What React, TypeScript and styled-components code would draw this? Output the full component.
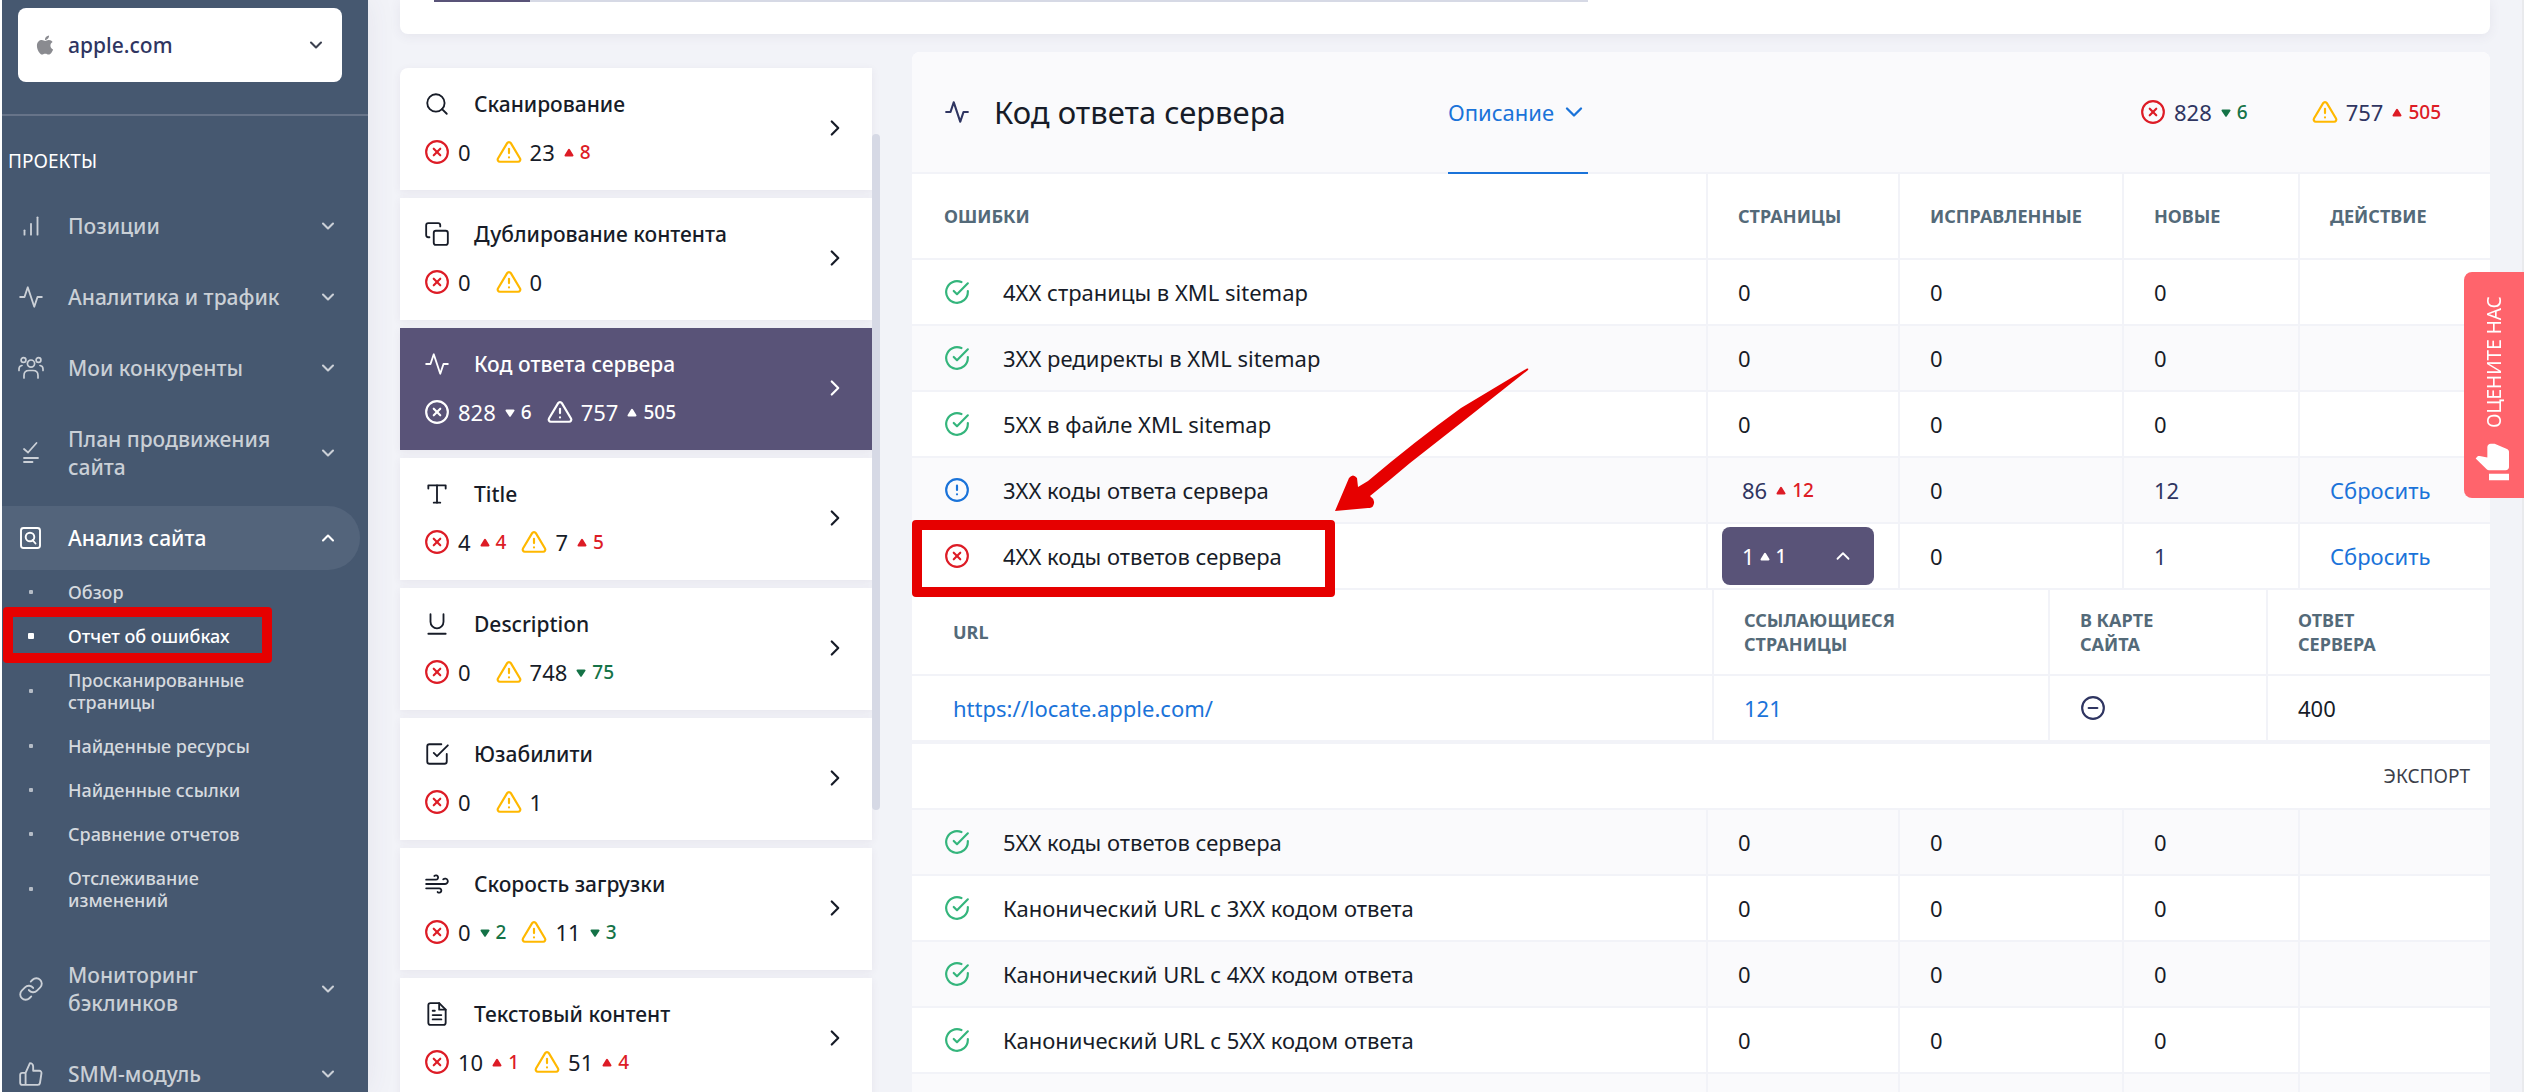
import React from 'react';
import styled, { createGlobalStyle, css } from 'styled-components';
import type { IconType } from 'react-icons';
import {
  FiActivity,
  FiAlertCircle,
  FiAlertTriangle,
  FiBarChart,
  FiCheckCircle,
  FiCheckSquare,
  FiChevronDown,
  FiChevronRight,
  FiChevronUp,
  FiCopy,
  FiFileText,
  FiLink,
  FiMinusCircle,
  FiSearch,
  FiThumbsUp,
  FiType,
  FiUnderline,
  FiWind,
  FiXCircle,
} from 'react-icons/fi';
import { FaApple } from 'react-icons/fa';

const c = {
  page: '#f2f3f8',
  stripe: '#fafafc',
  sidebar: '#465870',
  sidebarActive: '#53647b',
  purple: '#595378',
  ink: '#171c28',
  navy: '#2f3561',
  blue: '#1a73d9',
  head: '#546a79',
  red: '#dd1c26',
  green: '#157347',
  ok: '#34b57c',
  amber: '#ffb800',
  mark: '#e60000',
};

const Global = createGlobalStyle`
  *, *::before, *::after { box-sizing: border-box; }
  body { margin: 0; background: ${c.page}; }
  body, button, select { font-family: "Noto Sans", "Open Sans", sans-serif; }
  button { border: 0; background: none; padding: 0; text-align: left; color: inherit; cursor: pointer; }
  a { text-decoration: none; color: inherit; }
  svg { display: block; flex: none; }
`;

const Page = styled.div`
  display: flex;
  height: 100vh;
  overflow: hidden;
  border-left: 2px solid #fff;
  border-right: 2px solid #e9eaed;
  color: ${c.ink};
  font-size: 22px;
  line-height: 28px;
`;

/* ---------- sidebar ---------- */

const Sidebar = styled.aside`
  flex: 0 0 366px;
  background: ${c.sidebar};
  color: rgba(255, 255, 255, 0.72);
  box-shadow: 0 0 28px rgba(82, 63, 105, 0.08);
`;

const ProjectBox = styled.div`
  padding: 8px 26px 32px 16px;
  border-bottom: 2px solid #677489;
`;

const ProjectField = styled.label`
  position: relative;
  display: block;
  color: #8a8b90;
`;

const ProjectSelect = styled.select`
  appearance: none;
  display: block;
  width: 100%;
  height: 74px;
  padding: 0 50px;
  border: 0;
  border-radius: 8px;
  background: #fff;
  color: ${c.navy};
  font-size: 21px;
  font-weight: 500;
`;

const FieldIcon = styled.span<{ $side: 'left' | 'right' }>`
  position: absolute;
  top: 0;
  bottom: 0;
  ${(p) => p.$side}: 16px;
  display: flex;
  align-items: center;
  pointer-events: none;
  ${(p) => p.$side === 'right' && 'color: #3c4150;'}
`;

const GroupTitle = styled.h2`
  margin: 31px 0 19px;
  padding-left: 6px;
  color: #fff;
  font-size: 19px;
  font-weight: 400;
`;

const NavItem = styled.button<{ $active?: boolean }>`
  display: grid;
  grid-template-columns: 26px 1fr 20px;
  column-gap: 24px;
  align-items: center;
  width: calc(100% - 8px);
  min-height: 64px;
  margin-bottom: 7px;
  padding: 18px 22px 18px 16px;
  border-radius: 0 32px 32px 0;
  font-size: 21px;
  font-weight: 500;
  line-height: 28px;
  ${(p) =>
    p.$active &&
    css`
      margin-bottom: 0;
      background: ${c.sidebarActive};
      color: #fff;
    `}
`;

const SubList = styled.ul`
  list-style: none;
  margin: 0 0 21px;
  padding: 0;
`;

const SubLink = styled.a<{ $active?: boolean }>`
  display: grid;
  grid-template-columns: 26px 200px;
  column-gap: 24px;
  align-items: center;
  padding: 11px 16px;
  font-size: 18px;
  font-weight: 500;
  line-height: 22px;
  color: ${(p) => (p.$active ? '#fff' : 'rgba(255, 255, 255, 0.78)')};
`;

const Bullet = styled.span<{ $active?: boolean }>`
  justify-self: center;
  width: ${(p) => (p.$active ? 6 : 4)}px;
  height: ${(p) => (p.$active ? 6 : 4)}px;
  border-radius: 1px;
  background: ${(p) => (p.$active ? '#fff' : 'rgba(255, 255, 255, 0.6)')};
`;

/* ---------- main area ---------- */

const Main = styled.main`
  flex: 1;
  min-width: 0;
  padding: 0 32px;
`;

const TopCard = styled.section`
  padding: 0 34px 32px;
  border-radius: 0 0 8px 8px;
  background: #fff;
  box-shadow: 0 2px 12px rgba(82, 63, 105, 0.08);
`;

const Track = styled.div`
  width: 1154px;
  max-width: 100%;
  height: 2px;
  background: #d6d9e5;
`;

const TrackFill = styled.div`
  height: 100%;
  background: ${c.purple};
`;

const Columns = styled.div`
  display: grid;
  grid-template-columns: 480px minmax(0, 1fr);
  column-gap: 32px;
  align-items: start;
`;

const CategoryPane = styled.nav`
  display: flex;
  align-items: flex-start;
  margin-top: 34px;
`;

const CategoryList = styled.div`
  flex: 1;
  display: grid;
  gap: 8px;
`;

const ScrollThumb = styled.div`
  width: 8px;
  height: 676px;
  margin-top: 66px;
  border-radius: 4px;
  background: #d6d9e5;
`;

const Category = styled.button<{ $active?: boolean }>`
  display: grid;
  grid-template-columns: 26px 1fr 26px;
  column-gap: 24px;
  row-gap: 20px;
  align-items: center;
  align-content: start;
  min-height: 122px;
  padding: 22px 24px;
  background: ${(p) => (p.$active ? c.purple : '#fff')};
  color: ${(p) => (p.$active ? '#fff' : c.ink)};
  box-shadow: 0 2px 8px rgba(82, 63, 105, 0.07);
  &:first-child {
    border-radius: 8px 0 0 0;
  }
`;

const CategoryTitle = styled.span`
  font-size: 21px;
  font-weight: 500;
  line-height: 28px;
`;

const CategoryArrow = styled.span`
  grid-column: 3;
  grid-row: 1 / 3;
`;

const CategoryCounts = styled.span`
  grid-column: 1 / 3;
  grid-row: 2;
  display: flex;
  align-items: center;
`;

const Counter = styled.span<{ $wide?: boolean }>`
  display: flex;
  align-items: center;
  font-size: 22px;
  line-height: 28px;
  &:not(:last-child) {
    margin-right: ${(p) => (p.$wide ? 25 : 15)}px;
  }
  > svg {
    margin-right: 8px;
  }
`;

const Delta = styled.span<{ $tone: string; $tight?: boolean }>`
  display: inline-flex;
  align-items: center;
  gap: 6px;
  margin-left: ${(p) => (p.$tight ? 5 : 9)}px;
  color: ${(p) => p.$tone};
  font-size: 19px;
  font-weight: 500;
`;

/* ---------- report panel ---------- */

const Panel = styled.section`
  margin-top: 18px;
  border-radius: 8px 8px 0 0;
  background: #fff;
  overflow: hidden;
`;

const PanelHead = styled.header`
  display: flex;
  align-items: stretch;
  height: 122px;
  padding: 0 49px 0 32px;
  border-bottom: 2px solid ${c.page};
  background: ${c.stripe};
`;

const PanelTitle = styled.h1`
  display: flex;
  align-items: center;
  gap: 24px;
  flex: 0 0 504px;
  margin: 0;
  font-size: 31px;
  font-weight: 400;
  line-height: 40px;
  > svg {
    color: ${c.navy};
  }
`;

const DescriptionTab = styled.button`
  display: flex;
  align-items: center;
  gap: 6px;
  margin-bottom: -2px;
  border-bottom: 2px solid ${c.blue};
  color: ${c.blue};
  font-size: 22px;
`;

const PanelCounts = styled.div`
  display: flex;
  align-items: center;
  gap: 49px;
  margin-left: auto;
  color: ${c.navy};
`;

const Table = styled.table`
  width: 100%;
  table-layout: fixed;
  border-collapse: separate;
  border-spacing: 0;
`;

const Col = styled.col<{ $w?: number }>`
  ${(p) => p.$w && `width: ${p.$w}px;`}
`;

const Th = styled.th<{ $lead?: number }>`
  height: 86px;
  padding: 0 20px 0 ${(p) => p.$lead ?? 30}px;
  border-bottom: 2px solid ${c.page};
  color: ${c.head};
  font-size: 18px;
  font-weight: 700;
  line-height: 24px;
  text-align: left;
  &:not(:last-child) {
    border-right: 2px solid ${c.page};
  }
`;

const Td = styled.td<{ $lead?: number; $navy?: boolean }>`
  height: 66px;
  padding: 0 0 0 ${(p) => p.$lead ?? 30}px;
  border-bottom: 2px solid ${c.page};
  ${(p) => p.$navy && `color: ${c.navy};`}
  &:not(:last-child) {
    border-right: 2px solid ${c.page};
  }
`;

const Row = styled.tr<{ $striped?: boolean }>`
  background: ${(p) => (p.$striped ? c.stripe : '#fff')};
`;

const DetailsCell = styled.td`
  padding: 0;
`;

const ErrorName = styled.span`
  display: flex;
  align-items: center;
  gap: 33px;
  white-space: nowrap;
`;

const Link = styled.a`
  color: ${c.blue};
`;

const PagesCount = styled.span`
  display: flex;
  align-items: center;
  color: ${c.navy};
  padding-left: 4px;
`;

const PagesToggle = styled.button`
  display: flex;
  align-items: center;
  width: 152px;
  height: 58px;
  margin-left: -16px;
  padding: 0 20px;
  border-radius: 8px;
  background: ${c.purple};
  color: #fff;
  font-size: 22px;
  > svg {
    margin-left: auto;
  }
`;

const ExportBar = styled.div`
  display: flex;
  justify-content: flex-end;
  align-items: center;
  height: 68px;
  padding-right: 20px;
  border-top: 2px solid ${c.page};
  border-bottom: 2px solid ${c.page};
`;

const ExportButton = styled.button`
  color: #3c3f4a;
  font-size: 19px;
`;

/* ---------- overlays ---------- */

const Feedback = styled.button`
  position: fixed;
  top: 272px;
  right: 0;
  display: flex;
  align-items: center;
  gap: 14px;
  width: 60px;
  height: 226px;
  padding: 16px 0;
  writing-mode: vertical-rl;
  transform: rotate(180deg);
  border-radius: 0 8px 8px 0;
  background: #ff646c;
  color: #fff;
  font-size: 19px;
  line-height: 24px;
  white-space: nowrap;
  > svg {
    transform: rotate(90deg);
  }
`;

const Mark = styled.div<{ $x: number; $y: number; $w: number; $h: number }>`
  position: absolute;
  left: ${(p) => p.$x}px;
  top: ${(p) => p.$y}px;
  width: ${(p) => p.$w}px;
  height: ${(p) => p.$h}px;
  border: 10px solid ${c.mark};
  border-radius: 4px;
  pointer-events: none;
`;

const ArrowMark = styled.svg`
  position: absolute;
  left: 1330px;
  top: 360px;
  pointer-events: none;
`;

/* ---------- drawings ---------- */

const PeopleIcon = () => (
  <svg width="26" height="26" viewBox="0 0 26 26" fill="none" stroke="currentColor" strokeWidth="1.7" strokeLinecap="round">
    <circle cx="5.5" cy="5" r="2.4" />
    <circle cx="20.5" cy="5" r="2.4" />
    <circle cx="13" cy="8.6" r="3.6" />
    <path d="M6 23v-2.5c0-3 2-5 5-5h4c3 0 5 2 5 5V23M1 15.5v-1.500c0-2 1-3.200 3-3.500M25 15.500v-1.500c0-2-1-3.200-3-3.500" />
  </svg>
);

const PlanIcon = () => (
  <svg width="26" height="26" viewBox="0 0 26 26" fill="none" stroke="currentColor" strokeWidth="1.8" strokeLinecap="round">
    <path d="M6 9l4 3.500L18.500 3M6 18h14M6 22h8.500" />
  </svg>
);

const AuditIcon = () => (
  <svg width="26" height="26" viewBox="0 0 26 26" fill="none" stroke="currentColor" strokeWidth="1.9" strokeLinecap="round">
    <rect x="3" y="3" width="19" height="20" rx="2.5" />
    <circle cx="12" cy="12" r="4.3" />
    <path d="M14.500 15l3 3.500" />
  </svg>
);

const Caret = ({ up }: { up: boolean }) => (
  <svg width="10" height="9" viewBox="0 0 10 9" fill="currentColor" stroke="currentColor" strokeWidth="2" strokeLinejoin="round">
    {up ? <path d="M5 1.800L8.500 7.500H1.500z" /> : <path d="M5 7.800L8.500 2.500H1.500z" />}
  </svg>
);

/* ---------- data ---------- */

type Change = { up: boolean; value: number };
type Count = { value: number; change?: Change };

const up = (value: number): Change => ({ up: true, value });
const down = (value: number): Change => ({ up: false, value });

const navTop: { icon: IconType | React.FC; label: string }[] = [
  { icon: FiBarChart, label: 'Позиции' },
  { icon: FiActivity, label: 'Аналитика и трафик' },
  { icon: PeopleIcon, label: 'Мои конкуренты' },
  { icon: PlanIcon, label: 'План продвижения сайта' },
];

const navBottom: { icon: IconType; label: string }[] = [
  { icon: FiLink, label: 'Мониторинг бэклинков' },
  { icon: FiThumbsUp, label: 'SMM-модуль' },
];

const subItems = [
  'Обзор',
  'Отчет об ошибках',
  'Просканированные страницы',
  'Найденные ресурсы',
  'Найденные ссылки',
  'Сравнение отчетов',
  'Отслеживание изменений',
];

const categories: { icon: IconType; title: string; errors: Count; warnings: Count; active?: boolean }[] = [
  { icon: FiSearch, title: 'Сканирование', errors: { value: 0 }, warnings: { value: 23, change: up(8) } },
  { icon: FiCopy, title: 'Дублирование контента', errors: { value: 0 }, warnings: { value: 0 } },
  {
    icon: FiActivity,
    title: 'Код ответа сервера',
    errors: { value: 828, change: down(6) },
    warnings: { value: 757, change: up(505) },
    active: true,
  },
  { icon: FiType, title: 'Title', errors: { value: 4, change: up(4) }, warnings: { value: 7, change: up(5) } },
  { icon: FiUnderline, title: 'Description', errors: { value: 0 }, warnings: { value: 748, change: down(75) } },
  { icon: FiCheckSquare, title: 'Юзабилити', errors: { value: 0 }, warnings: { value: 1 } },
  { icon: FiWind, title: 'Скорость загрузки', errors: { value: 0, change: down(2) }, warnings: { value: 11, change: down(3) } },
  { icon: FiFileText, title: 'Текстовый контент', errors: { value: 10, change: up(1) }, warnings: { value: 51, change: up(4) } },
];

type Issue = {
  status: 'ok' | 'notice' | 'error';
  name: string;
  pages: number;
  change?: Change;
  fresh: number;
  open?: boolean;
};

const ok = (name: string): Issue => ({ status: 'ok', name, pages: 0, fresh: 0 });

const issues: Issue[] = [
  ok('4XX страницы в XML sitemap'),
  ok('3XX редиректы в XML sitemap'),
  ok('5XX в файле XML sitemap'),
  { status: 'notice', name: '3XX коды ответа сервера', pages: 86, change: up(12), fresh: 12 },
  { status: 'error', name: '4XX коды ответов сервера', pages: 1, change: up(1), fresh: 1, open: true },
  ok('5XX коды ответов сервера'),
  ok('Канонический URL с 3XX кодом ответа'),
  ok('Канонический URL с 4XX кодом ответа'),
  ok('Канонический URL с 5XX кодом ответа'),
];

/* ---------- parts ---------- */

const ChangeMark = ({ change, tone, tight }: { change: Change; tone?: string; tight?: boolean }) => (
  <Delta $tone={tone ?? (change.up ? c.red : c.green)} $tight={tight}>
    <Caret up={change.up} />
    {change.value}
  </Delta>
);

const CountView = ({ kind, count, light }: { kind: 'error' | 'warning'; count: Count; light?: boolean }) => (
  <Counter $wide={!count.change}>
    {kind === 'error' ? (
      <FiXCircle size={26} color={light ? '#fff' : c.red} />
    ) : (
      <FiAlertTriangle size={26} color={light ? '#fff' : c.amber} />
    )}
    {count.value}
    {count.change && <ChangeMark change={count.change} tone={light ? '#fff' : undefined} />}
  </Counter>
);

const StatusIcon = ({ status }: { status: Issue['status'] }) => {
  if (status === 'ok') return <FiCheckCircle size={26} color={c.ok} />;
  if (status === 'notice') return <FiAlertCircle size={26} color={c.blue} />;
  return <FiXCircle size={26} color={c.red} />;
};

const Details = () => (
  <>
    <Table>
      <colgroup>
        <Col />
        <Col $w={336} />
        <Col $w={218} />
        <Col $w={222} />
      </colgroup>
      <thead>
        <tr>
          <Th $lead={41}>URL</Th>
          <Th>
            ССЫЛАЮЩИЕСЯ
            <br />
            СТРАНИЦЫ
          </Th>
          <Th>
            В КАРТЕ
            <br />
            САЙТА
          </Th>
          <Th>
            ОТВЕТ
            <br />
            СЕРВЕРА
          </Th>
        </tr>
      </thead>
      <tbody>
        <tr>
          <Td $lead={41}>
            <Link href="#url">https://locate.apple.com/</Link>
          </Td>
          <Td>
            <Link href="#links">121</Link>
          </Td>
          <Td $navy>
            <FiMinusCircle size={26} />
          </Td>
          <Td>400</Td>
        </tr>
      </tbody>
    </Table>
    <ExportBar>
      <ExportButton type="button">ЭКСПОРТ</ExportButton>
    </ExportBar>
  </>
);

const IssueRow = ({ issue, striped }: { issue: Issue; striped: boolean }) => (
  <>
    <Row $striped={striped}>
      <Td $lead={32}>
        <ErrorName>
          <StatusIcon status={issue.status} />
          {issue.name}
        </ErrorName>
      </Td>
      <Td>
        {issue.open && issue.change ? (
          <PagesToggle type="button" aria-expanded="true">
            {issue.pages}
            <ChangeMark change={issue.change} tone="#fff" tight />
            <FiChevronUp size={22} />
          </PagesToggle>
        ) : issue.change ? (
          <PagesCount>
            {issue.pages}
            <ChangeMark change={issue.change} />
          </PagesCount>
        ) : (
          issue.pages
        )}
      </Td>
      <Td>0</Td>
      <Td $navy={issue.fresh > 0}>{issue.fresh}</Td>
      <Td>{issue.fresh > 0 && <Link href="#reset">Сбросить</Link>}</Td>
    </Row>
    {issue.open && (
      <tr>
        <DetailsCell colSpan={5}>
          <Details />
        </DetailsCell>
      </tr>
    )}
  </>
);

export default function App() {
  return (
    <>
      <Global />
      <Page>
        <Sidebar>
          <ProjectBox>
            <ProjectField aria-label="Проект">
              <ProjectSelect defaultValue="apple.com">
                <option>apple.com</option>
              </ProjectSelect>
              <FieldIcon $side="left">
                <FaApple size={22} />
              </FieldIcon>
              <FieldIcon $side="right">
                <FiChevronDown size={20} strokeWidth={2.5} />
              </FieldIcon>
            </ProjectField>
          </ProjectBox>
          <GroupTitle>ПРОЕКТЫ</GroupTitle>
          {navTop.map(({ icon: Icon, label }) => (
            <NavItem key={label} type="button">
              <Icon size={26} strokeWidth={1.7} />
              {label}
              <FiChevronDown size={20} strokeWidth={2.5} />
            </NavItem>
          ))}
          <NavItem type="button" $active aria-expanded="true">
            <AuditIcon />
            Анализ сайта
            <FiChevronUp size={20} strokeWidth={2.5} />
          </NavItem>
          <SubList>
            {subItems.map((label, i) => (
              <li key={label}>
                <SubLink href="#report" $active={i === 1}>
                  <Bullet $active={i === 1} />
                  {label}
                </SubLink>
              </li>
            ))}
          </SubList>
          {navBottom.map(({ icon: Icon, label }) => (
            <NavItem key={label} type="button">
              <Icon size={26} strokeWidth={1.7} />
              {label}
              <FiChevronDown size={20} strokeWidth={2.5} />
            </NavItem>
          ))}
        </Sidebar>

        <Main>
          <TopCard>
            <Track role="progressbar" aria-label="Проверено" aria-valuenow={96} aria-valuemax={1154}>
              <TrackFill style={{ width: `${(96 / 1154) * 100}%` }} />
            </Track>
          </TopCard>
          <Columns>
            <CategoryPane>
              <CategoryList>
                {categories.map(({ icon: Icon, title, errors, warnings, active }) => (
                  <Category key={title} type="button" $active={active}>
                    <Icon size={26} strokeWidth={1.7} />
                    <CategoryTitle>{title}</CategoryTitle>
                    <CategoryArrow>
                      <FiChevronRight size={26} />
                    </CategoryArrow>
                    <CategoryCounts>
                      <CountView kind="error" count={errors} light={active} />
                      <CountView kind="warning" count={warnings} light={active} />
                    </CategoryCounts>
                  </Category>
                ))}
              </CategoryList>
              <ScrollThumb />
            </CategoryPane>

            <Panel>
              <PanelHead>
                <PanelTitle>
                  <FiActivity size={26} />
                  Код ответа сервера
                </PanelTitle>
                <DescriptionTab type="button">
                  Описание
                  <FiChevronDown size={28} />
                </DescriptionTab>
                <PanelCounts>
                  <CountView kind="error" count={{ value: 828, change: down(6) }} />
                  <CountView kind="warning" count={{ value: 757, change: up(505) }} />
                </PanelCounts>
              </PanelHead>
              <Table>
                <colgroup>
                  <Col />
                  <Col $w={192} />
                  <Col $w={224} />
                  <Col $w={176} />
                  <Col $w={190} />
                </colgroup>
                <thead>
                  <tr>
                    <Th $lead={32}>ОШИБКИ</Th>
                    <Th>СТРАНИЦЫ</Th>
                    <Th>ИСПРАВЛЕННЫЕ</Th>
                    <Th>НОВЫЕ</Th>
                    <Th>ДЕЙСТВИЕ</Th>
                  </tr>
                </thead>
                <tbody>
                  {issues.map((issue, i) => (
                    <IssueRow key={issue.name} issue={issue} striped={i % 2 === 1} />
                  ))}
                  <Row $striped>
                    <Td />
                    <Td />
                    <Td />
                    <Td />
                    <Td />
                  </Row>
                </tbody>
              </Table>
            </Panel>
          </Columns>
        </Main>
      </Page>

      <Feedback type="button">
        <svg width="40" height="40" viewBox="0 0 24 24" fill="currentColor">
          <path d="M1 21h4V9H1v12zm22-11c0-1.100-.9-2-2-2h-6.310l.95-4.570.03-.32c0-.41-.17-.79-.44-1.060L14.170 1 7.590 7.590C7.220 7.950 7 8.450 7 9v10c0 1.100.9 2 2 2h9c.83 0 1.540-.5 1.840-1.220l3.020-7.050c.09-.23.14-.47.14-.73v-2z" />
        </svg>
        ОЦЕНИТЕ НАС
      </Feedback>

      <Mark $x={3} $y={607} $w={269} $h={56} />
      <Mark $x={912} $y={520} $w={423} $h={77} />
      <ArrowMark width="200" height="155" viewBox="0 0 200 155">
        <path
          d="M5 151L19 118Q23 113 27 118L28 127L38 121Q84 82 131 48L197 8.500Q199 8 198 10L131 63L80 103Q60 120 40 136L41 137Q46 140 43 146Q42 148 38 148Z"
          fill={c.mark}
        />
      </ArrowMark>
    </>
  );
}
